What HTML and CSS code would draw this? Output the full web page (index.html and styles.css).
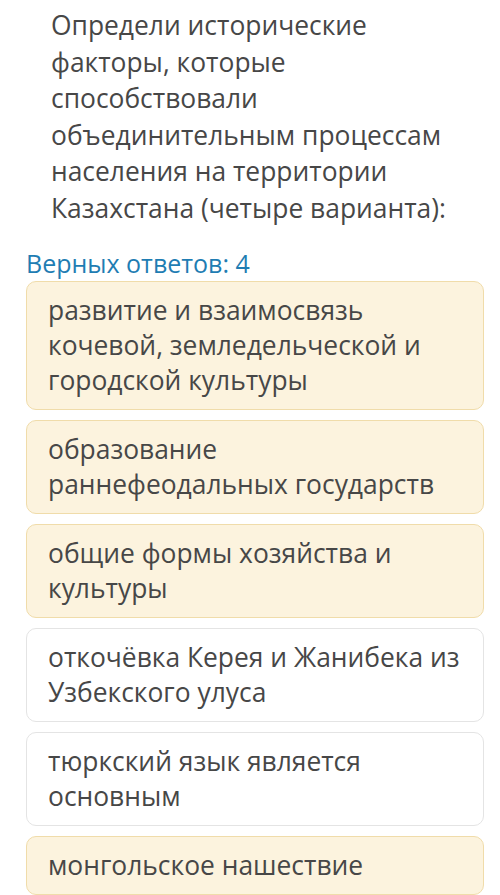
FILE: index.html
```html
<!DOCTYPE html>
<html lang="ru">
<head>
  <meta charset="UTF-8" />
  <meta name="viewport" content="width=device-width, initial-scale=1.0" />
  <title>Вопрос</title>
  <link rel="stylesheet" href="styles.css">
</head>
<body>
  <div class="page">
    <p class="question">Определи исторические факторы, которые способствовали объединительным процессам населения на территории Казахстана (четыре варианта):</p>

    <div class="hint">Верных ответов: 4</div>

    <div class="answers">
      <div class="answer selected">развитие и взаимосвязь кочевой, земледельческой и городской культуры</div>
      <div class="answer selected">образование раннефеодальных государств</div>
      <div class="answer selected">общие формы хозяйства и культуры</div>
      <div class="answer">откочёвка Керея и Жанибека из Узбекского улуса</div>
      <div class="answer">тюркский язык является основным</div>
      <div class="answer selected">монгольское нашествие</div>
    </div>
  </div>
</body>
</html>
```

FILE: styles.css
```css
body {
  margin: 0;
  background: #fff;
  font-family: "Open Sans", Arial, sans-serif;
  color: #474747;
}

.page {
  padding: 7px 16px 0 26px;
}

.question {
  margin: 0;
  padding: 0 20px 0 25px;
  font-size: 26.4px;
  line-height: 36.5px;
}

.hint {
  margin-top: 22px;
  font-size: 25px;
  line-height: 30px;
  color: #1f7db3;
}

.answers {
  display: flex;
  flex-direction: column;
  gap: 10px;
  margin-top: 3px;
}

.answer {
  padding: 11px 22px 11px 21px;
  font-size: 26.4px;
  line-height: 35px;
  background: #fff;
  border: 1px solid #e4e4e4;
  border-radius: 10px;
}

.answer.selected {
  background: #fcf3de;
  border-color: #f0dcaa;
}
```
